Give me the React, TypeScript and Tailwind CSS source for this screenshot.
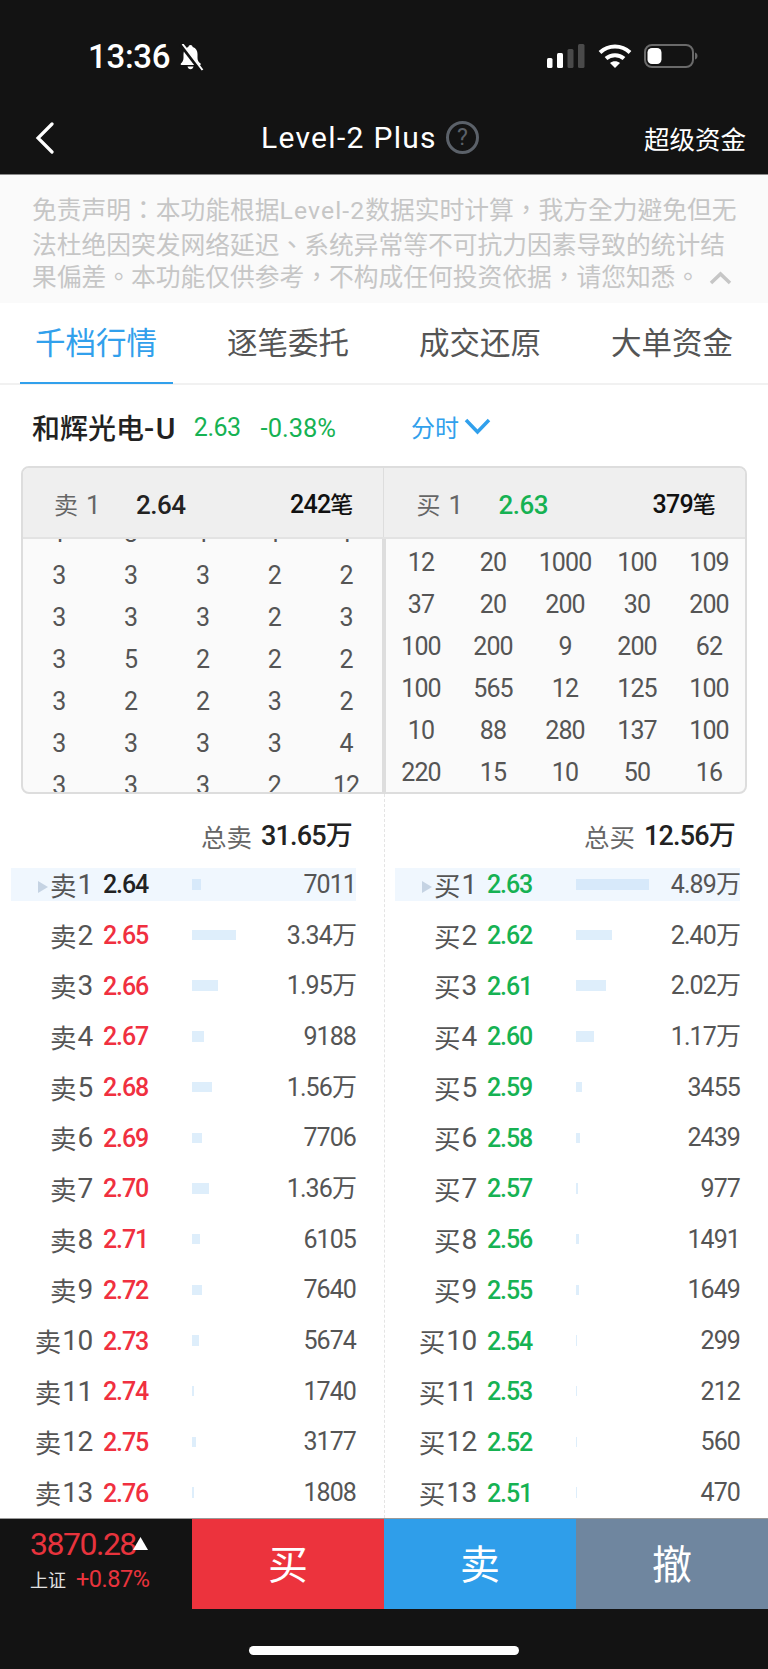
const NUM = "font-['Roboto','Noto_Sans_CJK_SC',sans-serif]";

const tabs = ['千档行情', '逐笔委托', '成交还原', '大单资金'];

const sellTicks = [
    [1, 3, 1, 1, 1],
    [3, 3, 3, 2, 2],
    [3, 3, 3, 2, 3],
    [3, 5, 2, 2, 2],
    [3, 2, 2, 3, 2],
    [3, 3, 3, 3, 4],
    [3, 3, 3, 2, 12],
];

const buyTicks = [
    [12, 20, 1000, 100, 109],
    [37, 20, 200, 30, 200],
    [100, 200, 9, 200, 62],
    [100, 565, 12, 125, 100],
    [10, 88, 280, 137, 100],
    [220, 15, 10, 50, 16],
];

// [price, bar width px, volume]
const sellLevels: [string, number, string][] = [
    ['2.64', 9, '7011'],
    ['2.65', 44, '3.34万'],
    ['2.66', 26, '1.95万'],
    ['2.67', 12, '9188'],
    ['2.68', 20, '1.56万'],
    ['2.69', 10, '7706'],
    ['2.70', 17, '1.36万'],
    ['2.71', 8, '6105'],
    ['2.72', 10, '7640'],
    ['2.73', 7, '5674'],
    ['2.74', 2, '1740'],
    ['2.75', 4, '3177'],
    ['2.76', 2, '1808'],
];

const buyLevels: [string, number, string][] = [
    ['2.63', 73, '4.89万'],
    ['2.62', 36, '2.40万'],
    ['2.61', 30, '2.02万'],
    ['2.60', 18, '1.17万'],
    ['2.59', 6, '3455'],
    ['2.58', 4, '2439'],
    ['2.57', 2, '977'],
    ['2.56', 3, '1491'],
    ['2.55', 3, '1649'],
    ['2.54', 1, '299'],
    ['2.53', 1, '212'],
    ['2.52', 1, '560'],
    ['2.51', 1, '470'],
];

function StatusBar() {
    return (
        <div className="flex h-[115px] items-start pl-[88px] pt-[37px]">
            <span className="font-['Roboto',sans-serif] text-[33px] font-medium leading-[40px] tracking-[-0.3px] text-white">13:36</span>
            <svg className="ml-[7px] mt-[7px]" width="28" height="27" viewBox="0 0 27 27" fill="white">
                <path d="M13 1c-1.200 0-2 .8-2.200 2C7.500 4 6 6.800 6 10v4c0 2.500-1.200 4-2.600 5.600-.5.6-.2 1.400.6 1.400h18.500c.8 0 1.100-.8.6-1.400C21.200 18 20 16.500 20 14v-4c0-3.200-1.500-6-4.800-7C15 1.800 14.200 1 13 1z" />
                <path d="M10 22.500h6c-.3 1.600-1.500 2.700-3 2.700s-2.700-1.100-3-2.700z" />
                <path d="M3 0l20 26" stroke="#131313" strokeWidth="4" />
                <path d="M5 0l20 26" stroke="white" strokeWidth="2" />
            </svg>
            <svg className="ml-[342px] mt-[7px]" width="38" height="24" viewBox="0 0 38 24">
                <rect x="0" y="14" width="5.500" height="10" rx="1.500" fill="white" />
                <rect x="10" y="9" width="6" height="15" rx="1.500" fill="white" />
                <rect x="20.500" y="5" width="6" height="19" rx="1.500" fill="#4a4a4a" />
                <rect x="31" y="0" width="6.500" height="24" rx="1.500" fill="#4a4a4a" />
            </svg>
            <svg className="ml-[13px] mt-[7px]" width="34" height="24" viewBox="0 0 34 24" fill="none" stroke="white" strokeWidth="4">
                <path d="M2 8.500C10.500 .5 23.500 .5 32 8.500" />
                <path d="M8 14.500c5-4.500 13-4.500 18 0" />
                <path d="M17 24l-5-5c2.800-2.400 7.200-2.400 10 0z" fill="white" stroke="none" />
            </svg>
            <svg className="ml-[12px] mt-[7px]" width="54" height="24" viewBox="0 0 54 24" fill="none">
                <rect x="1" y="1" width="48" height="22" rx="7" stroke="#6a6a6a" strokeWidth="2" />
                <rect x="3.500" y="4" width="14" height="16" rx="4.500" fill="white" />
                <path d="M51 8.500c1.600.5 2.500 1.800 2.500 3.500s-.9 3-2.500 3.500z" fill="#6a6a6a" />
            </svg>
        </div>
    );
}

function NavBar() {
    return (
        <div className="flex h-[60px] items-center border-b border-[#8a8a8a] pb-[14px] pl-[35px] pr-[22px]">
            <svg width="19" height="32" viewBox="0 0 19 32" fill="none" stroke="white" strokeWidth="3.200" strokeLinecap="round">
                <path d="M17 2L3 16l14 14" />
            </svg>
            <span className={`${NUM} ml-[207px] text-[30px] leading-[44px] tracking-[1.300px] text-white`}>Level-2 Plus</span>
            <span className="ml-[9px] flex h-[33px] w-[33px] items-center justify-center rounded-full border-[3px] border-[#5b6169] font-['Roboto',sans-serif] text-[23px] leading-none text-[#5b6169]">?</span>
            <span className="ml-auto font-['Noto_Sans_CJK_SC',sans-serif] text-[25.500px] leading-[36px] text-white">超级资金</span>
        </div>
    );
}

function Disclaimer() {
    return (
        <div className="h-[128px] bg-[#fafafa] pl-[32px] pt-[17px] font-['Noto_Sans_CJK_TC',sans-serif] text-[24.750px] leading-[32px] whitespace-nowrap text-[#c6c6c6]">
            <div>免责声明：本功能根据<span className={`${NUM} tracking-[1.100px]`}>Level-2</span>数据实时计算，我方全力避免但无</div>
            <div>法杜绝因突发网络延迟、系统异常等不可抗力因素导致的统计结</div>
            <div className="flex items-center">
                <span>果偏差。本功能仅供参考，不构成任何投资依据，请您知悉。</span>
                <svg className="ml-[9px] mt-[6px]" width="23" height="14" viewBox="0 0 23 14" fill="none" stroke="#c6c6c6" strokeWidth="3.500">
                    <path d="M2 12L11.500 3 21 12" />
                </svg>
            </div>
        </div>
    );
}

function Tabs() {
    return (
        <div className="grid h-[82px] grid-cols-4 border-b-2 border-[#f1f1f1]">
            {tabs.map((tab, i) => (
                <div key={tab} className="flex justify-center">
                    <div className={`flex h-[81px] w-[153px] items-center justify-center border-b-2 pb-[2px] text-[30.500px] ${i === 0 ? 'border-[#31a0ec] text-[#31a0ec]' : 'border-transparent text-[#555555]'}`}>
                        {tab}
                    </div>
                </div>
            ))}
        </div>
    );
}

function StockRow() {
    return (
        <div className="flex h-[81px] items-center pl-[32px] pt-[5px]">
            <span className="text-[28px] font-medium text-[#222222]">和辉光电<span className={`${NUM} text-[30px] tracking-[1.500px]`}>-U</span></span>
            <span className={`${NUM} ml-[17px] text-[25px] tracking-[-0.500px] text-[#16b253]`}>2.63</span>
            <span className={`${NUM} ml-[20px] text-[25.500px] text-[#16b253]`}>-0.38%</span>
            <span className="ml-[75px] -mt-[3px] text-[24px] text-[#31a0ec]">分时</span>
            <svg className="ml-[5px] -mt-[3px]" width="27" height="17" viewBox="0 0 27 17" fill="none" stroke="#31a0ec" strokeWidth="3.500">
                <path d="M2 2l11.500 12L25 2" />
            </svg>
        </div>
    );
}

function TickHeader({ side, price, priceClass, count, gap }: { side: string; price: string; priceClass: string; count: string; gap: string }) {
    return (
        <div className={`flex h-full flex-1 items-center pr-[30px] pt-[5px] ${gap}`}>
            <span className="w-[82px] text-[24px] text-[#666666]">{side}<span className={`${NUM} ml-[8px] text-[26px]`}>1</span></span>
            <span className={`${NUM} text-[26px] font-medium tracking-[-0.500px] ${priceClass}`}>{price}</span>
            <span className={`${NUM} ml-auto text-[25px] font-medium tracking-[-0.800px] text-[#111111]`}>{count}<span className="text-[23px]">笔</span></span>
        </div>
    );
}

function TickGrid({ rows, className }: { rows: number[][]; className: string }) {
    return (
        <div className={className}>
            {rows.map((row, i) => (
                <div key={i} className={`${NUM} grid h-[42px] grid-cols-5 items-center text-center text-[25px] tracking-[-0.900px] text-[#555555]`}>
                    {row.map((v, j) => (
                        <span key={j}>{v}</span>
                    ))}
                </div>
            ))}
        </div>
    );
}

function TickTable() {
    return (
        <div className="ml-[21px] mr-[21px] h-[328px] overflow-hidden rounded-[8px] border-2 border-[#dddddd] bg-[#fafafa]">
            <div className="flex h-[71px] items-center border-b-2 border-[#e3e3e3] bg-[#efefef]">
                <TickHeader side="卖" price="2.64" priceClass="text-[#222222]" count="242" gap="pl-[31px]" />
                <div className="h-full w-[1px] bg-[#dddddd]" />
                <TickHeader side="买" price="2.63" priceClass="text-[#16b253]" count="379" gap="pl-[33px]" />
            </div>
            <div className="flex h-[253px]">
                <div className="h-full w-[359px] overflow-hidden">
                    <TickGrid rows={sellTicks} className="-mt-[26px]" />
                </div>
                <div className="h-full w-[4px] bg-[#dddddd]" />
                <div className="h-full flex-1 overflow-hidden">
                    <TickGrid rows={buyTicks} className="-ml-[1px] mt-[3px]" />
                </div>
            </div>
        </div>
    );
}

function DepthColumn({ side, total, levels, priceClass, divided }: { side: string; total: string; levels: [string, number, string][]; priceClass: string; divided: boolean }) {
    return (
        <div className={`h-full w-[384px] pt-[24px] ${divided ? 'border-l border-dashed border-[#e4e4e4]' : ''}`}>
            <div className={`mb-[4px] flex h-[37px] items-center justify-end ${divided ? 'pr-[33px]' : 'pr-[32px]'}`}>
                <span className="text-[25.500px] text-[#666666]">总{side}</span>
                <span className={`${NUM} ml-[9px] text-[27px] font-medium tracking-[-0.800px] text-[#222222]`}>{total}</span>
            </div>
            {levels.map(([price, bar, volume], i) => (
                <div key={price} className={`flex h-[50.700px] items-center ${divided ? 'pl-[10px]' : 'pl-[11px]'}`}>
                    <div className={`flex h-[33px] w-[345px] items-center ${i === 0 ? 'bg-[#f0f7fe]' : ''}`}>
                        <div className="flex w-[82px] items-center justify-end text-[#555555]">
                            {i === 0 && (
                                <svg className="mr-[2px] mt-[6px]" width="10" height="12" viewBox="0 0 10 12">
                                    <path d="M0 0l10 6-10 6z" fill="#c5d3e3" />
                                </svg>
                            )}
                            <span className="text-[26.500px] leading-[33px]">{side}</span>
                            <span className={`${NUM} ml-[1px] text-[28px] leading-[33px] tracking-[-0.300px]`}>{i + 1}</span>
                        </div>
                        <div className={`${NUM} ml-[10px] w-[89px] pt-[1px] text-[25px] font-medium leading-[33px] tracking-[-1.100px] ${i === 0 && side === '卖' ? 'text-[#222222]' : priceClass}`}>
                            {price}
                        </div>
                        <div className="flex-1">
                            <div className={`h-[10.500px] ${i === 0 ? 'bg-[#d7e9fa]' : 'bg-[#deeefb]'}`} style={{ width: bar }} />
                        </div>
                        <div className={`${NUM} text-[25px] leading-[33px] tracking-[-0.900px] text-[#555555]`}>{volume}</div>
                    </div>
                </div>
            ))}
        </div>
    );
}

function BottomBar() {
    return (
        <div className="flex h-[91px] border-t border-[#9a9a9a]">
            <div className="w-[192px] pl-[30px] pt-[4px]">
                <div className="flex h-[42px] items-start">
                    <span className={`${NUM} text-[32px] leading-[42px] tracking-[-1.500px] text-[#e8333d]`}>3870.28</span>
                    <svg className="-ml-[3px] mt-[14px]" width="15" height="13" viewBox="0 0 15 13">
                        <path d="M7.500 0l7.500 13H0z" fill="white" />
                    </svg>
                </div>
                <div className="flex items-center">
                    <span className="text-[18px] leading-[28px] text-[#e0e0e0]">上证</span>
                    <span className={`${NUM} ml-[10px] text-[23.500px] leading-[28px] tracking-[-0.500px] text-[#e8333d]`}>+0.87%</span>
                </div>
            </div>
            <div className="flex flex-1 items-center justify-center bg-[#ec333d] pb-[4px] text-[40px] text-white">买</div>
            <div className="flex flex-1 items-center justify-center bg-[#2f9eea] pb-[4px] text-[40px] text-white">卖</div>
            <div className="flex flex-1 items-center justify-center bg-[#6f869f] pb-[4px] text-[40px] text-white">撤</div>
        </div>
    );
}

export default function App() {
    return (
        <div className="h-[1669px] w-[768px] overflow-hidden bg-white font-['Noto_Sans_CJK_SC',sans-serif]">
            <div className="bg-[#131313]">
                <StatusBar />
                <NavBar />
            </div>
            <Disclaimer />
            <Tabs />
            <StockRow />
            <TickTable />
            <div className="flex h-[724px]">
                <DepthColumn side="卖" total="31.65万" levels={sellLevels} priceClass="text-[#f0303f]" divided={false} />
                <DepthColumn side="买" total="12.56万" levels={buyLevels} priceClass="text-[#16b253]" divided />
            </div>
            <div className="bg-[#131313]">
                <BottomBar />
                <div className="flex h-[60px] justify-center pt-[37px]">
                    <div className="h-[9px] w-[270px] rounded-full bg-white" />
                </div>
            </div>
        </div>
    );
}
